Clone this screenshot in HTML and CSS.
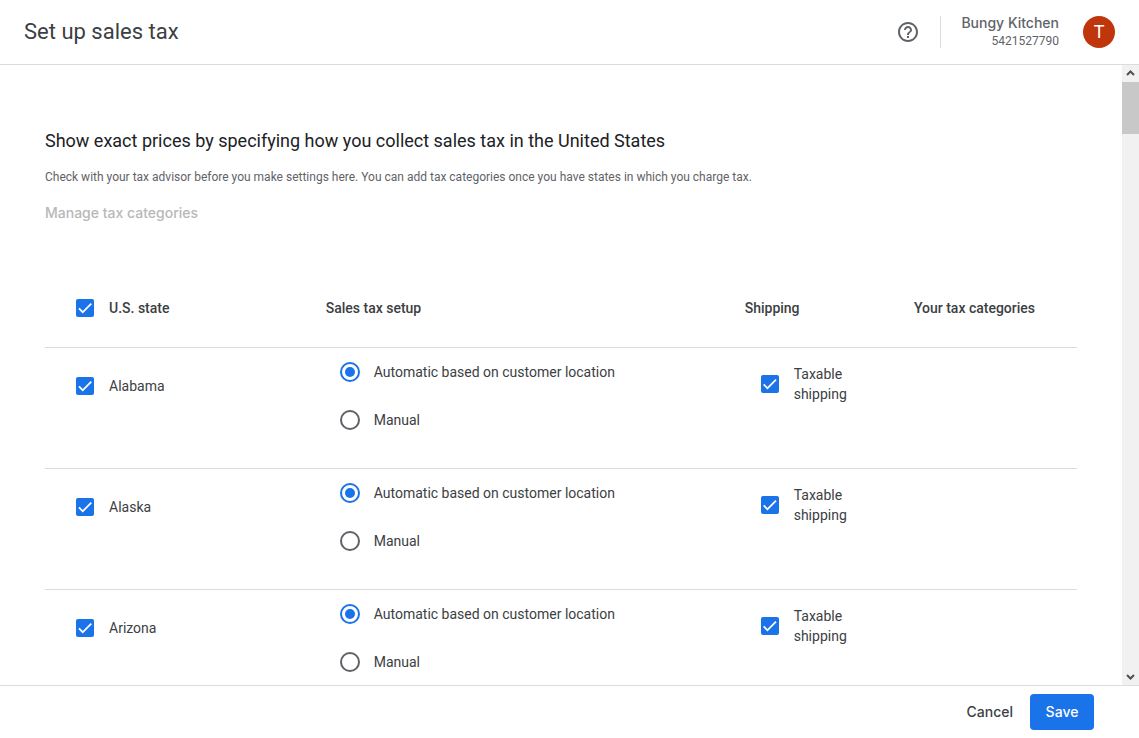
FILE: index.html
```html
<!DOCTYPE html>
<html lang="en">
<head>
<meta charset="utf-8">
<meta name="viewport" content="width=device-width, initial-scale=1">
<title>Set up sales tax</title>
<link rel="stylesheet" href="styles.css">
</head>
<body class="page">
<header class="topbar">
  <h1 class="topbar-title">Set up sales tax</h1>
  <button class="help" type="button" aria-label="Help">
    <svg viewBox="0 0 24 24" width="24" height="24" aria-hidden="true"><path fill="currentColor" d="M11 18h2v-2h-2v2zm1-16C6.480 2 2 6.480 2 12s4.480 10 10 10 10-4.480 10-10S17.520 2 12 2zm0 18c-4.410 0-8-3.590-8-8s3.590-8 8-8 8 3.590 8 8-3.590 8-8 8zm0-14c-2.210 0-4 1.790-4 4h2c0-1.100.9-2 2-2s2 .9 2 2c0 2-3 1.750-3 5h2c0-2.250 3-2.500 3-5 0-2.210-1.790-4-4-4z"/></svg>
  </button>
  <span class="divider"></span>
  <div class="account">
    <span class="account-name">Bungy Kitchen</span>
    <span class="account-id">5421527790</span>
  </div>
  <button class="avatar" type="button">T</button>
</header>
<div class="body">
  <main class="content">
    <h2 class="heading">Show exact prices by specifying how you collect sales tax in the United States</h2>
    <p class="note">Check with your tax advisor before you make settings here. You can add tax categories once you have states in which you charge tax.</p>
    <button class="manage" type="button" disabled>Manage tax categories</button>
    <table class="states">
      <thead>
        <tr>
          <th class="col-state" scope="col"><label class="pick"><input class="check" type="checkbox" checked>U.S. state</label></th>
          <th class="col-setup" scope="col">Sales tax setup</th>
          <th class="col-shipping" scope="col">Shipping</th>
          <th class="col-categories" scope="col">Your tax categories</th>
        </tr>
      </thead>
      <tbody>
        <tr>
          <td><label class="pick"><input class="check" type="checkbox" checked>Alabama</label></td>
          <td><div class="options">
            <label class="option"><input class="radio" type="radio" name="alabama" checked>Automatic based on customer location</label>
            <label class="option"><input class="radio" type="radio" name="alabama">Manual</label>
          </div></td>
          <td><label class="ship"><input class="check" type="checkbox" checked><span>Taxable shipping</span></label></td>
          <td></td>
        </tr>
        <tr>
          <td><label class="pick"><input class="check" type="checkbox" checked>Alaska</label></td>
          <td><div class="options">
            <label class="option"><input class="radio" type="radio" name="alaska" checked>Automatic based on customer location</label>
            <label class="option"><input class="radio" type="radio" name="alaska">Manual</label>
          </div></td>
          <td><label class="ship"><input class="check" type="checkbox" checked><span>Taxable shipping</span></label></td>
          <td></td>
        </tr>
        <tr>
          <td><label class="pick"><input class="check" type="checkbox" checked>Arizona</label></td>
          <td><div class="options">
            <label class="option"><input class="radio" type="radio" name="arizona" checked>Automatic based on customer location</label>
            <label class="option"><input class="radio" type="radio" name="arizona">Manual</label>
          </div></td>
          <td><label class="ship"><input class="check" type="checkbox" checked><span>Taxable shipping</span></label></td>
          <td></td>
        </tr>
      </tbody>
    </table>
  </main>
  <div class="scrollbar" aria-hidden="true">
    <svg class="scroll-arrow" viewBox="0 0 17 17" width="17" height="17"><path d="M5 10l3.500-3.500L12 10"/></svg>
    <div class="scroll-thumb"></div>
    <svg class="scroll-arrow scroll-down" viewBox="0 0 17 17" width="17" height="17"><path d="M5 7l3.500 3.500L12 7"/></svg>
  </div>
</div>
<footer class="footer">
  <button class="btn" type="button">Cancel</button>
  <button class="btn btn-primary" type="button">Save</button>
</footer>
</body>
</html>
```

FILE: styles.css
```css
* {
  box-sizing: border-box;
}

.page {
  margin: 0;
  height: 100vh;
  display: flex;
  flex-direction: column;
  background: #fff;
  color: #3c4043;
  font: 14px/20px Roboto, Arial, sans-serif;
}

button {
  border: 0;
  padding: 0;
  background: none;
  color: inherit;
  cursor: pointer;
}

.topbar {
  display: flex;
  align-items: center;
  flex: none;
  padding: 14px 24px;
  border-bottom: 1px solid #dadce0;
}

.topbar-title {
  flex: 1;
  margin: 0;
  font: 400 22px/32px Roboto, sans-serif;
}

.help {
  display: flex;
  color: #5f6368;
}

.divider {
  height: 32px;
  margin: 0 20px;
  border-left: 1px solid #dadce0;
}

.account {
  display: flex;
  flex-direction: column;
  align-items: flex-end;
  margin-right: 24px;
  color: #5f6368;
}

.account-name {
  font: 500 14px/18px Inter, sans-serif;
}

.account-id {
  font-size: 12px;
  line-height: 18px;
}

.avatar {
  width: 32px;
  height: 32px;
  border-radius: 50%;
  background: #bf360c;
  color: #fff;
  font: 400 18px/32px Roboto, sans-serif;
}

.body {
  display: flex;
  flex: 1;
  min-height: 0;
}

.content {
  flex: 1;
  min-width: 0;
  padding: 64px 45px 0;
  overflow-y: auto;
  scrollbar-width: none;
}

.heading {
  margin: 0 0 16px;
  color: #202124;
  font: 400 18px/24px Roboto, sans-serif;
}

.note {
  margin: 0 0 16px;
  color: #5f6368;
  font-size: 12px;
  line-height: 16px;
}

.manage {
  display: block;
  margin-bottom: 44px;
  color: #b8b8b8;
  font: 500 14px/24px Inter, sans-serif;
}

.states {
  width: 100%;
  table-layout: fixed;
  border-collapse: collapse;
}

.states tr {
  border-bottom: 1px solid #dadce0;
}

.states th,
.states td {
  padding: 0;
  text-align: left;
  vertical-align: top;
}

.states th {
  padding: 29px 0;
  font-weight: 500;
}

.states td {
  padding-bottom: 24px;
}

.col-state {
  width: 27.2%;
}

.col-setup {
  width: 40.6%;
}

.col-shipping {
  width: 16.4%;
}

.pick {
  display: flex;
  align-items: center;
  gap: 15px;
  padding-left: 31px;
}

td .pick {
  padding-top: 28px;
}

.option {
  display: flex;
  align-items: center;
  gap: 14px;
  height: 48px;
  padding-left: 14px;
}

.ship {
  display: flex;
  align-items: center;
  gap: 15px;
  padding: 16px 56px 0 16px;
}

.check,
.radio {
  appearance: none;
  flex: none;
  display: block;
  margin: 0;
}

.check {
  width: 18px;
  height: 18px;
  border: 2px solid #5f6368;
  border-radius: 2px;
}

.check:checked {
  border: 0;
  background: #1a73e8;
}

.check:checked::before {
  content: "";
  display: block;
  height: 100%;
  background: #fff;
  clip-path: polygon(37.5% 66%, 20.1% 49%, 13% 56%, 37.5% 80.5%, 88.5% 29.2%, 81.6% 22.3%);
}

.radio {
  width: 20px;
  height: 20px;
  padding: 3px;
  border: 2px solid #5f6368;
  border-radius: 50%;
}

.radio:checked {
  border-color: #1a73e8;
  background: #1a73e8 content-box;
}

.scrollbar {
  display: flex;
  flex-direction: column;
  flex: none;
  background: #f1f1f1;
}

.scroll-arrow {
  flex: none;
  fill: none;
  stroke: #505050;
  stroke-width: 2;
}

.scroll-down {
  margin-top: auto;
}

.scroll-thumb {
  height: 52px;
  background: #c8c8c8;
}

.footer {
  display: flex;
  justify-content: flex-end;
  flex: none;
  gap: 2px;
  padding: 8px 45px;
  border-top: 1px solid #dadce0;
}

.btn {
  padding: 0 15px;
  border-radius: 4px;
  font: 500 14px/36px Inter, sans-serif;
}

.btn-primary {
  min-width: 64px;
  background: #1a73e8;
  color: #fff;
}
```
